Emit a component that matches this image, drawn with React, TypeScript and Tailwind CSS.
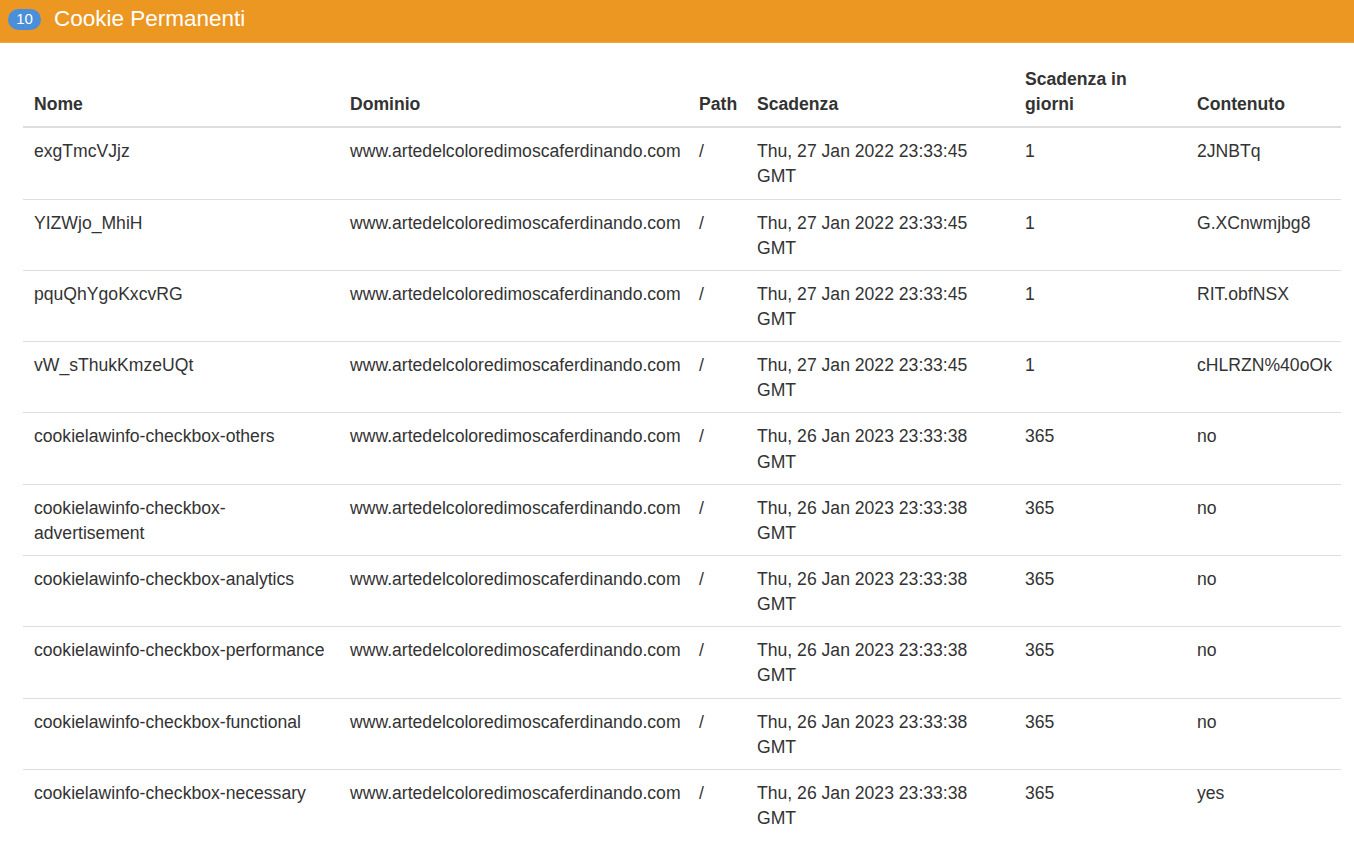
const rows = [
  ["exgTmcVJjz", "Thu, 27 Jan 2022 23:33:45 GMT", "1", "2JNBTq"],
  ["YIZWjo_MhiH", "Thu, 27 Jan 2022 23:33:45 GMT", "1", "G.XCnwmjbg8"],
  ["pquQhYgoKxcvRG", "Thu, 27 Jan 2022 23:33:45 GMT", "1", "RIT.obfNSX"],
  ["vW_sThukKmzeUQt", "Thu, 27 Jan 2022 23:33:45 GMT", "1", "cHLRZN%40oOk"],
  ["cookielawinfo-checkbox-others", "Thu, 26 Jan 2023 23:33:38 GMT", "365", "no"],
  ["cookielawinfo-checkbox-advertisement", "Thu, 26 Jan 2023 23:33:38 GMT", "365", "no"],
  ["cookielawinfo-checkbox-analytics", "Thu, 26 Jan 2023 23:33:38 GMT", "365", "no"],
  ["cookielawinfo-checkbox-performance", "Thu, 26 Jan 2023 23:33:38 GMT", "365", "no"],
  ["cookielawinfo-checkbox-functional", "Thu, 26 Jan 2023 23:33:38 GMT", "365", "no"],
  ["cookielawinfo-checkbox-necessary", "Thu, 26 Jan 2023 23:33:38 GMT", "365", "yes"],
];

const domain = "www.artedelcoloredimoscaferdinando.com";

export default function App() {
  return (
    <div className="min-h-screen bg-white font-['Liberation_Sans',Arial,sans-serif] text-[#333]">
      <div className="flex h-[43px] items-center gap-[13px] border-b border-[#f0a640] bg-[#ec9722] px-2 pb-[3px]">
        <span className="flex h-[21px] w-[33px] items-center justify-center rounded-full bg-[#4a8fdc] text-[15px] text-white">
          10
        </span>
        <h2 className="text-[22.5px] leading-none text-white">Cookie Permanenti</h2>
      </div>

      <div className="px-[23px] pt-[13px]">
        <table className="w-[1318px] table-fixed border-collapse text-[17.6px] leading-[25.14px]">
          <colgroup>
            <col className="w-[316px]" />
            <col className="w-[349px]" />
            <col className="w-[58px]" />
            <col className="w-[268px]" />
            <col className="w-[172px]" />
            <col className="w-[155px]" />
          </colgroup>
          <thead>
            <tr className="border-b-2 border-[#ddd] text-left align-bottom font-bold">
              <th className="px-[11px] pt-[11px] pb-[9px]">Nome</th>
              <th className="px-[11px] pt-[11px] pb-[9px]">Dominio</th>
              <th className="px-[11px] pt-[11px] pb-[9px]">Path</th>
              <th className="px-[11px] pt-[11px] pb-[9px]">Scadenza</th>
              <th className="px-[11px] pt-[11px] pb-[9px]">
                Scadenza in
                <br />
                giorni
              </th>
              <th className="px-[11px] pt-[11px] pb-[9px]">Contenuto</th>
            </tr>
          </thead>
          <tbody>
            {rows.map(([name, exp, days, value]) => (
              <tr key={name} className="border-t border-[#ddd] align-top">
                <td className="px-[11px] pt-[11px] pb-[9px]">
                  {name === "cookielawinfo-checkbox-advertisement" ? (
                    <>
                      cookielawinfo-checkbox-
                      <br />
                      advertisement
                    </>
                  ) : (
                    name
                  )}
                </td>
                <td className="px-[11px] pt-[11px] pb-[9px]">{domain}</td>
                <td className="px-[11px] pt-[11px] pb-[9px]">/</td>
                <td className="px-[11px] pt-[11px] pb-[9px]">{exp}</td>
                <td className="px-[11px] pt-[11px] pb-[9px]">{days}</td>
                <td className="px-[11px] pt-[11px] pb-[9px]">{value}</td>
              </tr>
            ))}
          </tbody>
        </table>
      </div>
    </div>
  );
}
